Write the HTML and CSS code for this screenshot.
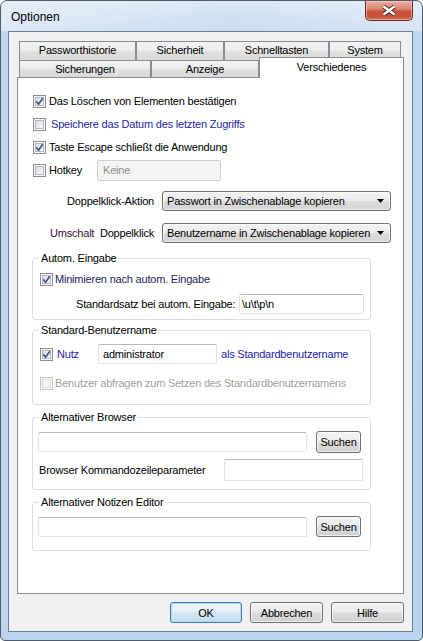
FILE: index.html
```html
<!DOCTYPE html>
<html lang="de">
<head>
<meta charset="utf-8">
<title>Optionen</title>
<link rel="stylesheet" href="styles.css">
</head>
<body>
<div class="window">
  <div class="titlebar">
    <span class="title">Optionen</span>
    <div class="close">
      <svg width="16" height="11" viewBox="0 0 16 11">
        <path d="M2.5 1.5 L13.5 9.5 M13.5 1.5 L2.5 9.5" stroke="#4a1f18" stroke-width="4.4" fill="none"/>
        <path d="M2.5 1.5 L13.5 9.5 M13.5 1.5 L2.5 9.5" stroke="#ffffff" stroke-width="2.6" fill="none"/>
      </svg>
    </div>
  </div>
  <div class="client">
    <div class="tabs">
      <div class="tabrow row1">
        <div class="tab t-pw">Passworthistorie</div>
        <div class="tab t-si">Sicherheit</div>
        <div class="tab t-sn">Schnelltasten</div>
        <div class="tab t-sy">System</div>
      </div>
      <div class="tabrow row2">
        <div class="tab t-sc">Sicherungen</div>
        <div class="tab t-an">Anzeige</div>
        <div class="tab t-ve selected">Verschiedenes</div>
      </div>
    </div>
    <div class="panel">
      <div class="opts">
        <div class="row">
          <span class="cb"><svg class="tick" width="13" height="13" viewBox="0 0 13 13"><path d="M3.3 6.4 L5.6 9.2 L9.8 3.2" stroke="#3f5688" stroke-width="1.7" fill="none"/></svg></span>
          <span class="lbl">Das Löschen von Elementen bestätigen</span>
        </div>
        <div class="row">
          <span class="cb"></span>
          <span class="lbl blue shift">Speichere das Datum des letzten Zugriffs</span>
        </div>
        <div class="row">
          <span class="cb"><svg class="tick" width="13" height="13" viewBox="0 0 13 13"><path d="M3.3 6.4 L5.6 9.2 L9.8 3.2" stroke="#3f5688" stroke-width="1.7" fill="none"/></svg></span>
          <span class="lbl">Taste Escape schließt die Anwendung</span>
        </div>
        <div class="row">
          <span class="cb"></span>
          <span class="lbl hk">Hotkey</span>
          <span class="tb tb-dis hotkey">Keine</span>
        </div>
      </div>

      <div class="combos">
        <div class="crow">
          <span class="clabel">Doppelklick-Aktion</span>
          <div class="combo">
            <span>Passwort in Zwischenablage kopieren</span>
            <svg width="7" height="4" viewBox="0 0 7 4"><polygon points="0,0 7,0 3.5,4" fill="#000"/></svg>
          </div>
        </div>
        <div class="crow">
          <span class="clabel"><span class="purple">Umschalt</span>&nbsp; Doppelklick</span>
          <div class="combo">
            <span>Benutzername in Zwischenablage kopieren</span>
            <svg width="7" height="4" viewBox="0 0 7 4"><polygon points="0,0 7,0 3.5,4" fill="#000"/></svg>
          </div>
        </div>
      </div>

      <fieldset class="grp g1">
        <legend>Autom. Eingabe</legend>
        <div class="gin g1in">
          <div class="grow">
            <span class="cb"><svg class="tick" width="13" height="13" viewBox="0 0 13 13"><path d="M3.3 6.4 L5.6 9.2 L9.8 3.2" stroke="#3f5688" stroke-width="1.7" fill="none"/></svg></span>
            <span class="lbl2 navy">Minimieren nach autom. Eingabe</span>
          </div>
          <div class="grow seq">
            <span class="seqlabel">Standardsatz bei autom. Eingabe:</span>
            <span class="tb seqtb">\u\t\p\n</span>
          </div>
        </div>
      </fieldset>

      <fieldset class="grp g2">
        <legend>Standard-Benutzername</legend>
        <div class="gin g2in">
          <div class="grow">
            <span class="cb"><svg class="tick" width="13" height="13" viewBox="0 0 13 13"><path d="M3.3 6.4 L5.6 9.2 L9.8 3.2" stroke="#3f5688" stroke-width="1.7" fill="none"/></svg></span>
            <span class="nutz blue2">Nutz</span>
            <span class="tb usertb">administrator</span>
            <span class="als blue2">als Standardbenutzername</span>
          </div>
          <div class="grow r2">
            <span class="cb cb-dis"></span>
            <span class="lbl2 gray">Benutzer abfragen zum Setzen des Standardbenutzernamens</span>
          </div>
        </div>
      </fieldset>

      <fieldset class="grp g3">
        <legend>Alternativer Browser</legend>
        <div class="gin g3in">
          <div class="brow">
            <span class="tb pathtb"></span>
            <button class="btn small">Suchen</button>
          </div>
          <div class="brow b2">
            <span class="cmdlabel">Browser Kommandozeileparameter</span>
            <span class="tb cmdtb"></span>
          </div>
        </div>
      </fieldset>

      <fieldset class="grp g4">
        <legend>Alternativer Notizen Editor</legend>
        <div class="gin g4in">
          <div class="brow b3">
            <span class="tb pathtb"></span>
            <button class="btn small small2">Suchen</button>
          </div>
        </div>
      </fieldset>
    </div>
    <div class="buttons">
      <button class="btn default w72">OK</button>
      <button class="btn w73">Abbrechen</button>
      <button class="btn w73">Hilfe</button>
    </div>
  </div>
</div>
</body>
</html>
```

FILE: styles.css
```css
html, body {
  margin: 0;
  padding: 0;
  background: #ffffff;
}
body {
  font-family: "Liberation Sans", Arial, sans-serif;
  font-size: 11px;
  letter-spacing: -0.2px;
  color: #000;
  white-space: nowrap;
}

.window {
  box-sizing: border-box;
  width: 423px;
  height: 641px;
  border: 1px solid #4f5b68;
  border-radius: 7px 7px 5px 5px;
  background: linear-gradient(180deg, #dbe8f6 0px, #c8dcf1 30px, #bed6ef 31px, #bcd4ee 100%);
  display: flex;
  flex-direction: column;
  overflow: hidden;
}

.titlebar {
  height: 30px;
  flex: none;
  display: flex;
  justify-content: space-between;
  align-items: flex-start;
  padding-left: 10px;
  background: linear-gradient(90deg, rgba(255,255,255,0.35), rgba(255,255,255,0) 55%, rgba(255,255,255,0.25));
}
.title {
  font-size: 12px;
  letter-spacing: 0;
  padding-top: 2px;
  line-height: 28px;
  color: #000;
}
.close {
  box-sizing: border-box;
  width: 48px;
  height: 20px;
  margin-right: 9px;
  border: 1px solid #6a2a20;
  border-top: none;
  border-radius: 0 0 5px 5px;
  background: linear-gradient(180deg, #eab0a3 0%, #d98a78 40%, #c9553f 55%, #c4503a 80%, #d27562 100%);
  box-shadow: inset 0 0 0 1px rgba(255, 210, 200, 0.55);
  display: flex;
  align-items: center;
  justify-content: center;
}

.client {
  flex: 1;
  margin: 0 9px 8px 7px;
  border: 1px solid #6f7f90;
  background: #f0f0f0;
  display: flex;
  flex-direction: column;
  padding: 9px 8px 8px 8px;
  min-height: 0;
}

/* tabs */
.tabs {
  flex: none;
}
.tabrow {
  display: flex;
  margin-left: 2px;
  align-items: flex-start;
}
.tab {
  box-sizing: border-box;
  border: 1px solid #898c95;
  border-bottom: none;
  background: linear-gradient(180deg, #f4f4f4 0%, #ececec 45%, #e0e0e0 55%, #d9d9d9 100%);
  text-align: center;
  color: #000;
}
.row1 .tab {
  height: 19px;
  line-height: 17px;
}
.row2 .tab {
  height: 17px;
  line-height: 16px;
}
.row2 .tab.selected {
  height: 21px;
  line-height: 18px;
  margin-top: -3px;
  margin-bottom: -1px;
  background: #ffffff;
  position: relative;
  z-index: 1;
}
.t-pw { width: 117px; }
.t-si { width: 88px; }
.t-sn { width: 105px; }
.t-sy { width: 72px; }
.t-sc { width: 132px; }
.t-an { width: 108px; }
.t-ve { width: 145px; }

.panel {
  flex: 1;
  border: 1px solid #898c95;
  background: #ffffff;
  min-height: 0;
}

/* checkbox */
.cb {
  box-sizing: border-box;
  width: 13px;
  height: 13px;
  flex: none;
  border: 1px solid #8e8f8f;
  background: linear-gradient(135deg, #d4d7db 0%, #eceef0 60%, #fbfbfb 100%);
  box-shadow: inset 0 0 0 1px #f6f6f6, inset 0 0 0 2px #b4b9bf;
  position: relative;
}
.cb .tick {
  position: absolute;
  left: -1px;
  top: -1px;
}
.cb-dis {
  border-color: #c4c4c4;
  background: #f4f4f4;
  box-shadow: inset 0 0 0 1px #fafafa, inset 0 0 0 2px #dadada;
}

/* top options */
.opts {
  display: flex;
  flex-direction: column;
  gap: 1px;
  padding: 12px 0 0 15px;
}
.row {
  display: flex;
  align-items: center;
  height: 22px;
}
.lbl {
  margin-left: 3px;
}
.lbl.shift {
  margin-left: 5px;
}
.blue {
  color: #1f1fa0;
}
.blue2 {
  color: #1c1cb0;
}
.navy {
  color: #1c1c62;
}
.gray {
  color: #a0a0a0;
}
.purple {
  color: #3a1038;
}
.hk {
  width: 48px;
}

/* text boxes */
.tb {
  box-sizing: border-box;
  display: flex;
  align-items: center;
  height: 20px;
  flex: none;
  background: #ffffff;
  border: 1px solid #dfe3e8;
  border-top-color: #b5b8bf;
  border-radius: 2px;
  padding-left: 3px;
}
.tb-dis {
  background: #f3f3f3;
  border-color: #cfcfcf;
  color: #8d8d8d;
}
.hotkey {
  width: 124px;
  height: 21px;
  padding-left: 5px;
}

/* combos */
.combos {
  display: flex;
  flex-direction: column;
  gap: 12px;
  margin-top: 10px;
}
.crow {
  display: flex;
  align-items: center;
  height: 20px;
}
.clabel {
  width: 136px;
  margin-right: 8px;
  text-align: right;
}
.combo {
  box-sizing: border-box;
  width: 229px;
  height: 20px;
  border: 1px solid #707070;
  border-radius: 3px;
  background: linear-gradient(180deg, #f3f3f3 0%, #ebebeb 48%, #dddddd 52%, #d2d2d2 100%);
  box-shadow: inset 0 0 0 1px rgba(255,255,255,0.6);
  display: flex;
  align-items: center;
  justify-content: space-between;
  padding: 0 6px 0 4px;
}

/* group boxes */
.grp {
  box-sizing: border-box;
  width: 339px;
  margin: 0 0 0 14px;
  padding: 0;
  min-inline-size: 0;
  border: 1px solid #d5dfe5;
  border-radius: 3px;
}
.grp legend {
  padding: 0 2px;
  margin-left: 6px;
  height: 14px;
  line-height: 14px;
}
.g1 { margin-top: 8px; }
.g2 { margin-top: 3px; }
.g3 { margin-top: 5px; }
.g4 { margin-top: 5px; }

.g1in { padding: 4px 0 5px 7px; }
.g2in { padding: 7px 0 11px 7px; }
.g3in { padding: 7px 0 8px 5px; }
.g4in { padding: 7px 0 13px 5px; }

.grow {
  display: flex;
  align-items: center;
  height: 20px;
}
.lbl2 {
  margin-left: 2px;
}
.seq {
  margin-top: 5px;
  padding-left: 36px;
}
.seqlabel {
  width: 163px;
}
.seqtb {
  width: 125px;
  padding-left: 2px;
}
.nutz {
  margin-left: 4px;
  width: 41px;
}
.usertb {
  width: 119px;
  padding-left: 4px;
}
.als {
  margin-left: 4px;
}
.r2 {
  margin-top: 9px;
}

.brow {
  display: flex;
  align-items: center;
  height: 22px;
}
.b2 {
  margin-top: 6px;
}
.b3 {
  height: 21px;
}
.pathtb {
  width: 269px;
}
.cmdlabel {
  width: 186px;
  padding-left: 1px;
  box-sizing: border-box;
}
.cmdtb {
  width: 139px;
  height: 22px;
}

/* buttons */
.btn {
  box-sizing: border-box;
  height: 21px;
  padding: 0;
  font-family: "Liberation Sans", Arial, sans-serif;
  font-size: 11px;
  letter-spacing: -0.2px;
  color: #000;
  border: 1px solid #707070;
  border-radius: 3px;
  background: linear-gradient(180deg, #f3f3f3 0%, #ebebeb 48%, #dddddd 52%, #d0d0d0 100%);
  box-shadow: inset 0 0 0 1px rgba(255,255,255,0.65);
}
.btn.small {
  width: 45px;
  height: 22px;
  margin-left: 9px;
}
.btn.small2 {
  height: 21px;
}
.buttons {
  flex: none;
  display: flex;
  justify-content: flex-end;
  gap: 8px;
  margin-top: 8px;
  height: 21px;
}
.w72 { width: 72px; }
.w73 { width: 73px; }
.btn.default {
  border-color: #3c7fb1;
  background: linear-gradient(180deg, #eef5fb 0%, #e2eef8 48%, #d3e5f3 52%, #c6ddef 100%);
  box-shadow: inset 0 0 0 1px #a9dcf6;
}
```
